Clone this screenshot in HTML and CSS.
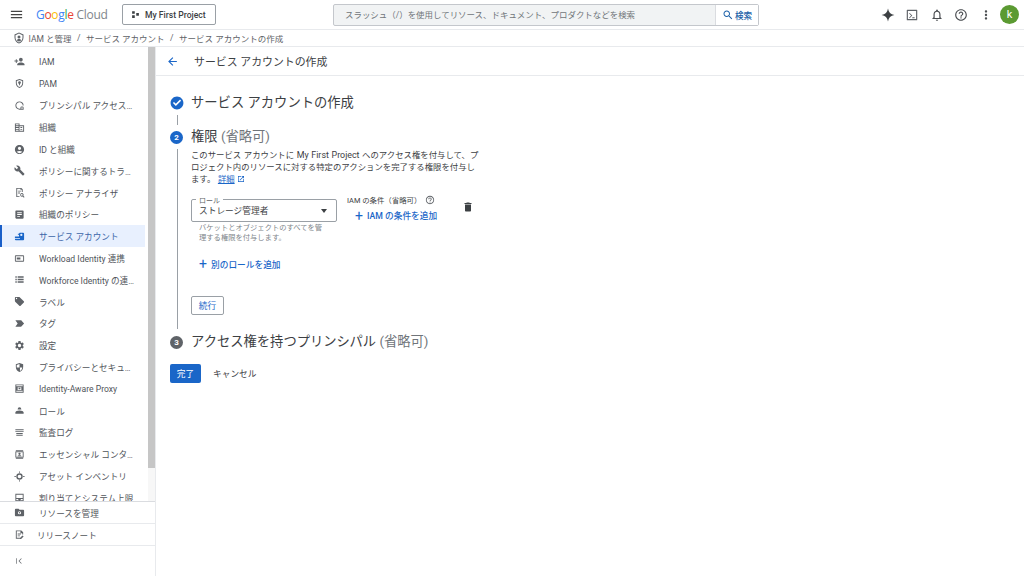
FILE: index.html
```html
<!DOCTYPE html>
<html lang="ja">
<head>
<meta charset="utf-8">
<title>サービス アカウントの作成</title>
<link rel="stylesheet" href="styles.css">
</head>
<body>
<svg class="defs" width="0" height="0" aria-hidden="true">
  <symbol id="menu" viewBox="0 0 24 24"><path d="M3 18h18v-2H3v2zm0-5h18v-2H3v2zm0-7v2h18V6H3z"/></symbol>
  <symbol id="back" viewBox="0 0 24 24"><path d="M20 11H7.83l5.59-5.59L12 4l-8 8 8 8 1.41-1.41L7.83 13H20v-2z"/></symbol>
  <symbol id="search" viewBox="0 0 24 24"><path d="M15.5 14h-.79l-.28-.27C15.41 12.59 16 11.11 16 9.5 16 5.91 13.09 3 9.5 3S3 5.91 3 9.5 5.91 16 9.5 16c1.61 0 3.09-.59 4.23-1.57l.27.28v.79l5 4.99L20.49 19l-4.99-5zm-6 0C7.01 14 5 11.99 5 9.5S7.01 5 9.5 5 14 7.01 14 9.5 11.99 14 9.5 14z"/></symbol>
  <symbol id="help" viewBox="0 0 24 24"><path d="M11 18h2v-2h-2v2zm1-16C6.48 2 2 6.48 2 12s4.48 10 10 10 10-4.48 10-10S17.52 2 12 2zm0 18c-4.41 0-8-3.59-8-8s3.59-8 8-8 8 3.59 8 8-3.59 8-8 8zm0-14c-2.21 0-4 1.79-4 4h2c0-1.1.9-2 2-2s2 .9 2 2c0 2-3 1.75-3 5h2c0-2.25 3-2.5 3-5 0-2.21-1.79-4-4-4z"/></symbol>
  <symbol id="bell" viewBox="0 0 24 24"><path d="M12 22c1.1 0 2-.9 2-2h-4c0 1.1.89 2 2 2zm6-6v-5c0-3.07-1.64-5.64-4.5-6.32V4c0-.83-.67-1.5-1.5-1.5s-1.5.67-1.5 1.5v.68C7.63 5.36 6 7.92 6 11v5l-2 2v1h16v-1l-2-2zm-2 1H8v-6c0-2.48 1.51-4.5 4-4.5s4 2.02 4 4.5v6z"/></symbol>
  <symbol id="dots" viewBox="0 0 24 24"><path d="M12 8c1.1 0 2-.9 2-2s-.9-2-2-2-2 .9-2 2 .9 2 2 2zm0 2c-1.1 0-2 .9-2 2s.9 2 2 2 2-.9 2-2-.9-2-2-2zm0 6c-1.1 0-2 .9-2 2s.9 2 2 2 2-.9 2-2-.9-2-2-2z"/></symbol>
  <symbol id="spark" viewBox="0 0 24 24"><path d="M12 1c1 6.500 4.500 10 11 11-6.500 1-10 4.500-11 11-1-6.500-4.500-10-11-11 6.500-1 10-4.500 11-11z"/></symbol>
  <symbol id="terminal" viewBox="0 0 24 24"><path d="M20 3H4a1 1 0 0 0-1 1v16a1 1 0 0 0 1 1h16a1 1 0 0 0 1-1V4a1 1 0 0 0-1-1zm-1 16H5V5h14v14zM7 9.500l3.500 3.500L7 16.500 8 17.500l4.500-4.500L8 8.500zM12.500 16h4v1.500h-4z"/></symbol>
  <symbol id="shield" viewBox="0 0 24 24"><path d="M12 1 3 5v6c0 5.550 3.840 10.740 9 12 5.160-1.260 9-6.450 9-12V5l-9-4zm0 2.200 7 3.100V11c0 4.520-2.980 8.690-7 9.930C7.980 19.690 5 15.520 5 11V6.300l7-3.100zM12 7a3 3 0 1 0 0 6 3 3 0 0 0 0-6zm0 7c-2 0-4 1-4 2.500V17a6 6 0 0 0 8 0v-.5c0-1.500-2-2.500-4-2.500z"/></symbol>
  <symbol id="personadd" viewBox="0 0 24 24"><path d="M15 12c2.210 0 4-1.790 4-4s-1.790-4-4-4-4 1.790-4 4 1.790 4 4 4zm-9-2V7H4v3H1v2h3v3h2v-3h3v-2H6zm9 4c-2.670 0-8 1.340-8 4v2h16v-2c0-2.660-5.330-4-8-4z"/></symbol>
  <symbol id="pam" viewBox="0 0 24 24"><path d="M12 2 4 5v6c0 5 3.400 9.700 8 11 4.600-1.300 8-6 8-11V5l-8-3zm0 2.100 6 2.300V11c0 4-2.600 7.800-6 8.900C8.600 18.800 6 15 6 11V6.400l6-2.300zM12 7a3 3 0 0 0-1 5.830V16h2v-3.170A3 3 0 0 0 12 7z"/></symbol>
  <symbol id="principal" viewBox="0 0 24 24"><path d="M12 3a9 9 0 1 0 2 17.780v-2.060A7 7 0 1 1 19 12h2a9 9 0 0 0-9-9zm5 11a3 3 0 0 0-3 3v4h7v-4a3 3 0 0 0-3-3h-1zm0 2h1a1 1 0 0 1 1 1v2h-3v-2a1 1 0 0 1 1-1z"/></symbol>
  <symbol id="org" viewBox="0 0 24 24"><path d="M12 7V3H2v18h20V7H12zM10 19H4v-2h6v2zm0-4H4v-2h6v2zm0-4H4V9h6v2zm0-4H4V5h6v2zm10 12h-8V9h8v10zm-2-8h-4v2h4v-2zm0 4h-4v2h4v-2z"/></symbol>
  <symbol id="account" viewBox="0 0 24 24"><path d="M12 2C6.480 2 2 6.480 2 12s4.480 10 10 10 10-4.480 10-10S17.520 2 12 2zm0 4c1.930 0 3.500 1.570 3.500 3.500S13.930 13 12 13s-3.500-1.570-3.500-3.500S10.070 6 12 6zm0 14c-2.030 0-4.430-.82-6.140-2.880C7.550 15.800 9.680 15 12 15s4.450.8 6.140 2.120C16.430 19.180 14.030 20 12 20z"/></symbol>
  <symbol id="wrench" viewBox="0 0 24 24"><path d="M22.700 19l-9.100-9.100c.9-2.300.4-5-1.500-6.900-2-2-5-2.400-7.400-1.300L9 6 6 9 1.600 4.700C.4 7.100.9 10.100 2.900 12.100c1.900 1.900 4.600 2.400 6.900 1.500l9.100 9.100c.4.4 1 .4 1.400 0l2.300-2.300c.5-.4.5-1.100.1-1.400z"/></symbol>
  <symbol id="analyzer" viewBox="0 0 24 24"><path d="M5 2h11l3 3v6h-2V6h-3V4H7v16h5v2H5V2zm4 6h6v2H9V8zm0 4h4v2H9v-2zm8 1a4 4 0 0 1 3.300 6.300L23 22l-1.400 1.400-2.700-2.700A4 4 0 1 1 17 13zm0 2a2 2 0 1 0 0 4 2 2 0 0 0 0-4z"/></symbol>
  <symbol id="policy" viewBox="0 0 24 24"><path d="M19 3H5c-1.100 0-2 .9-2 2v14c0 1.100.9 2 2 2h14c1.100 0 2-.9 2-2V5c0-1.100-.9-2-2-2zm-2 10H7v-2h10v2zm0-4H7V7h10v2zm-4 8H7v-2h6v2z"/></symbol>
  <symbol id="svcacct" viewBox="0 0 24 24"><path d="M2 12h9V8H8.500V6H11a2 2 0 0 1 2-2h7a2 2 0 0 1 2 2v12a2 2 0 0 1-2 2H4a2 2 0 0 1-2-2v-1h11v-2H2v-3zM16 6a2.500 2.500 0 1 0 0 5 2.500 2.500 0 0 0 0-5z"/></symbol>
  <symbol id="workload" viewBox="0 0 24 24"><path d="M20 5H4a2 2 0 0 0-2 2v10a2 2 0 0 0 2 2h16a2 2 0 0 0 2-2V7a2 2 0 0 0-2-2zm0 12H4V7h16v10zM6 10h8v4H6z"/></symbol>
  <symbol id="list" viewBox="0 0 24 24"><path d="M3 5h3v3H3zm0 5.500h3v3H3zM3 16h3v3H3zM8 5h13v3H8zm0 5.500h13v3H8zM8 16h13v3H8z"/></symbol>
  <symbol id="tag" viewBox="0 0 24 24"><path d="M21.410 11.580l-9-9C12.050 2.220 11.550 2 11 2H4c-1.100 0-2 .9-2 2v7c0 .55.22 1.050.59 1.420l9 9c.36.36.86.58 1.410.58.55 0 1.050-.22 1.410-.59l7-7c.37-.36.59-.86.59-1.410 0-.55-.23-1.060-.59-1.420zM5.500 7C4.670 7 4 6.330 4 5.500S4.670 4 5.500 4 7 4.670 7 5.500 6.330 7 5.500 7z"/></symbol>
  <symbol id="label" viewBox="0 0 24 24"><path d="M3 5h12c.67 0 1.270.33 1.630.84L22 12l-5.370 6.160c-.36.51-.96.84-1.630.84H3l5-7-5-7z"/></symbol>
  <symbol id="gear" viewBox="0 0 24 24"><path d="M19.140 12.940c.04-.3.06-.61.06-.94 0-.32-.02-.64-.07-.94l2.030-1.580c.18-.14.23-.41.12-.61l-1.920-3.320c-.12-.22-.37-.29-.59-.22l-2.390.96c-.5-.38-1.030-.7-1.620-.94l-.36-2.540c-.04-.24-.24-.41-.48-.41h-3.840c-.24 0-.43.17-.47.41l-.36 2.540c-.59.24-1.130.57-1.620.94l-2.390-.96c-.22-.08-.47 0-.59.22L2.740 8.870c-.12.21-.08.47.12.61l2.030 1.580c-.05.3-.09.63-.09.94s.02.64.07.94l-2.030 1.580c-.18.14-.23.41-.12.61l1.920 3.320c.12.22.37.29.59.22l2.390-.96c.5.38 1.030.7 1.620.94l.36 2.540c.05.24.24.41.48.41h3.840c.24 0 .44-.17.47-.41l.36-2.540c.59-.24 1.130-.56 1.620-.94l2.390.96c.22.08.47 0 .59-.22l1.920-3.320c.12-.22.07-.47-.12-.61l-2.010-1.580zM12 15.600c-1.980 0-3.600-1.620-3.600-3.600s1.620-3.600 3.600-3.600 3.600 1.620 3.600 3.600-1.620 3.600-3.600 3.600z"/></symbol>
  <symbol id="privacy" viewBox="0 0 24 24"><path d="M12 2 4 5v6c0 5 3.400 9.700 8 11 4.600-1.300 8-6 8-11V5l-8-3zm1 17.700V12h5c-.4 3.500-2.400 6.600-5 7.700zM12 12H6V6.400l6-2.300V12z"/></symbol>
  <symbol id="iap" viewBox="0 0 24 24"><path d="M3 3h18v18H3V3zm2 2v2h14V5H5zm0 12v2h14v-2H5zM8 9v6h8V9H8zm2 1.500h4v3h-4z"/></symbol>
  <symbol id="role" viewBox="0 0 24 24"><path d="M12 5a4 4 0 0 1 4 4v1H8V9a4 4 0 0 1 4-4zM3 16c0-2 4-4 9-4s9 2 9 4v3H3v-3z"/></symbol>
  <symbol id="audit" viewBox="0 0 24 24"><path d="M3 5h18v2H3zm0 4h18v2H3zm2 4h14v2H5zm0 4h14v2H5z"/></symbol>
  <symbol id="contact" viewBox="0 0 24 24"><path d="M4 2h16v2H4zm0 18h16v2H4zM4 5h16a1 1 0 0 1 1 1v12a1 1 0 0 1-1 1H4a1 1 0 0 1-1-1V6a1 1 0 0 1 1-1zm1 2v10h14V7H5zm7 1a2.500 2.500 0 1 1 0 5 2.500 2.500 0 0 1 0-5zm-4.500 8c0-1.500 2-2.500 4.500-2.500s4.500 1 4.500 2.500z"/></symbol>
  <symbol id="asset" viewBox="0 0 24 24"><path d="M12 5a7 7 0 1 0 0 14 7 7 0 0 0 0-14zm0 3a4 4 0 1 1 0 8 4 4 0 0 1 0-8zM11 1h2v3h-2zm0 19h2v3h-2zM1 11h3v2H1zm19 0h3v2h-3z"/></symbol>
  <symbol id="quota" viewBox="0 0 24 24"><path d="M3 4h18v16H3V4zm2 2v7h14V6H5zm0 9v3h14v-3h-4a3 3 0 0 1-6 0H5z"/></symbol>
  <symbol id="folder" viewBox="0 0 24 24"><path d="M20 6h-8l-2-2H4a2 2 0 0 0-2 2v12a2 2 0 0 0 2 2h16a2 2 0 0 0 2-2V8a2 2 0 0 0-2-2zm-8 3a3.500 3.500 0 1 1 0 7 3.500 3.500 0 0 1 0-7zm0 2a1.500 1.500 0 1 0 0 3 1.500 1.500 0 0 0 0-3z"/></symbol>
  <symbol id="notes" viewBox="0 0 24 24"><path d="M4 3h12l4 4v5h-2V9h-4V5H6v14h7v2H4V3zm4 7h7v2H8v-2zm0 4h5v2H8v-2zm10.500 0L21 16.500 15.500 22H13v-2.500l5.500-5.500z"/></symbol>
  <symbol id="collapse" viewBox="0 0 24 24"><path d="M4 4h2v16H4zm16 1.400L18.600 4l-8 8 8 8 1.400-1.400L13.400 12z"/></symbol>
  <symbol id="launch" viewBox="0 0 24 24"><path d="M19 19H5V5h7V3H3v18h18v-9h-2v7zM14 3v2h3.590l-9.830 9.830 1.410 1.410L19 6.410V10h2V3h-7z"/></symbol>
  <symbol id="trash" viewBox="0 0 24 24"><path d="M6 19c0 1.100.9 2 2 2h8c1.100 0 2-.9 2-2V7H6v12zM19 4h-3.500l-1-1h-5l-1 1H5v2h14V4z"/></symbol>
  <symbol id="check" viewBox="0 0 24 24"><path d="M12 1C5.930 1 1 5.930 1 12s4.930 11 11 11 11-4.930 11-11S18.070 1 12 1zm-2 16-5-5 1.800-1.800 3.200 3.200 7.200-7.200L19 8l-9 9z"/></symbol>
  <symbol id="project" viewBox="0 0 24 24"><path d="M3 3h7v7H3zm0 11h7v7H3zm11-6h7v7h-7z"/></symbol>
</svg>

<header class="topbar">
  <svg class="ic ic-menu"><use href="#menu"/></svg>
  <div class="logo"><span class="g-b">G</span><span class="g-r">o</span><span class="g-y">o</span><span class="g-b">g</span><span class="g-g">l</span><span class="g-r">e</span> <span class="logo-cloud">Cloud</span></div>
  <button class="project"><svg class="ic ic-project"><use href="#project"/></svg>My First Project</button>
  <div class="search">
    <div class="search-input">スラッシュ（/）を使用してリソース、ドキュメント、プロダクトなどを検索</div>
    <div class="search-btn"><svg class="ic ic-search"><use href="#search"/></svg>検索</div>
  </div>
  <div class="tools">
    <svg class="ic ic-tool ic-spark"><use href="#spark"/></svg>
    <svg class="ic ic-tool ic-term"><use href="#terminal"/></svg>
    <svg class="ic ic-tool"><use href="#bell"/></svg>
    <svg class="ic ic-tool"><use href="#help"/></svg>
    <svg class="ic ic-tool"><use href="#dots"/></svg>
    <div class="avatar">k</div>
  </div>
</header>

<nav class="crumbs">
  <svg class="ic ic-crumb"><use href="#shield"/></svg>
  <span>IAM と管理</span><span class="sep">/</span><span>サービス アカウント</span><span class="sep">/</span><span>サービス アカウントの作成</span>
</nav>

<div class="body">
  <aside class="sidebar">
    <div class="nav-wrap">
      <ul class="nav">
        <li><svg class="ic"><use href="#personadd"/></svg><span>IAM</span></li>
        <li><svg class="ic"><use href="#pam"/></svg><span>PAM</span></li>
        <li><svg class="ic"><use href="#principal"/></svg><span>プリンシパル アクセス…</span></li>
        <li><svg class="ic"><use href="#org"/></svg><span>組織</span></li>
        <li><svg class="ic"><use href="#account"/></svg><span>ID と組織</span></li>
        <li><svg class="ic"><use href="#wrench"/></svg><span>ポリシーに関するトラ…</span></li>
        <li><svg class="ic"><use href="#analyzer"/></svg><span>ポリシー アナライザ</span></li>
        <li><svg class="ic"><use href="#policy"/></svg><span>組織のポリシー</span></li>
        <li class="active"><svg class="ic"><use href="#svcacct"/></svg><span>サービス アカウント</span></li>
        <li><svg class="ic"><use href="#workload"/></svg><span>Workload Identity 連携</span></li>
        <li><svg class="ic"><use href="#list"/></svg><span>Workforce Identity の連…</span></li>
        <li><svg class="ic"><use href="#tag"/></svg><span>ラベル</span></li>
        <li><svg class="ic"><use href="#label"/></svg><span>タグ</span></li>
        <li><svg class="ic"><use href="#gear"/></svg><span>設定</span></li>
        <li><svg class="ic"><use href="#privacy"/></svg><span>プライバシーとセキュ…</span></li>
        <li><svg class="ic"><use href="#iap"/></svg><span>Identity-Aware Proxy</span></li>
        <li><svg class="ic"><use href="#role"/></svg><span>ロール</span></li>
        <li><svg class="ic"><use href="#audit"/></svg><span>監査ログ</span></li>
        <li><svg class="ic"><use href="#contact"/></svg><span>エッセンシャル コンタ…</span></li>
        <li><svg class="ic"><use href="#asset"/></svg><span>アセット インベントリ</span></li>
        <li><svg class="ic"><use href="#quota"/></svg><span>割り当てとシステム上限</span></li>
      </ul>
      <div class="scroll"><div class="thumb"></div></div>
    </div>
    <div class="side-foot foot-a"><svg class="ic"><use href="#folder"/></svg><span>リソースを管理</span></div>
    <div class="side-foot foot-b"><svg class="ic"><use href="#notes"/></svg><span>リリースノート</span></div>
    <div class="side-collapse"><svg class="ic"><use href="#collapse"/></svg></div>
  </aside>

  <main class="main">
    <div class="titlebar">
      <svg class="ic ic-back"><use href="#back"/></svg>
      <h1>サービス アカウントの作成</h1>
    </div>
    <div class="content">
      <div class="step step-1">
        <svg class="ic ic-check"><use href="#check"/></svg>
        <h2>サービス アカウントの作成</h2>
      </div>
      <div class="link-line"></div>
      <div class="step step-2">
        <span class="num num-on">2</span>
        <h2>権限 <em>(省略可)</em></h2>
      </div>
      <div class="step-body">
        <p class="desc">このサービス アカウントに <span class="latin">My First Project</span> へのアクセス権を付与して、プロジェクト内のリソースに対する特定のアクションを完了する権限を付与します。 <a class="more">詳細</a><svg class="ic ic-launch"><use href="#launch"/></svg></p>
        <div class="binding">
          <div class="role-col">
            <div class="select">
              <span class="select-label">ロール</span>
              <span>ストレージ管理者</span>
              <i class="caret"></i>
            </div>
            <p class="hint">バケットとオブジェクトのすべてを管理する権限を付与します。</p>
          </div>
          <div class="cond-col">
            <div class="cond-label">IAM の条件（省略可）<svg class="ic ic-help"><use href="#help"/></svg></div>
            <div class="add add-cond"><span class="plus">+</span>IAM の条件を追加</div>
          </div>
          <svg class="ic ic-trash"><use href="#trash"/></svg>
        </div>
        <div class="add add-role"><span class="plus">+</span>別のロールを追加</div>
        <button class="continue">続行</button>
      </div>
      <div class="step step-3">
        <span class="num">3</span>
        <h2>アクセス権を持つプリンシパル <em>(省略可)</em></h2>
      </div>
      <div class="actions">
        <button class="done">完了</button>
        <button class="cancel">キャンセル</button>
      </div>
    </div>
  </main>
</div>
</body>
</html>
```
FILE: styles.css
```css
* { box-sizing: border-box; }
html, body { margin: 0; height: 100%; overflow: hidden; }
body {
  width: 1024px; height: 576px; display: flex; flex-direction: column;
  background: #fff; color: #3c4043;
  font-family: Roboto, "Noto Sans CJK JP", sans-serif; font-size: 8.6px;
}
.defs { position: absolute; }
.ic { width: 11px; height: 11px; fill: #5f6368; flex: none; display: block; }
ul, h1, h2, p { margin: 0; padding: 0; font-weight: 400; }
button { font-family: inherit; cursor: pointer; }

.topbar { height: 30px; flex: none; display: flex; align-items: center; border-bottom: 1px solid #e8eaed; }
.ic-menu { width: 15px; height: 15px; margin-left: 9px; fill: #444; }
.logo { margin-left: 12px; width: 73px; font-family: "Open Sans", Roboto, sans-serif; font-size: 12px; letter-spacing: -.3px; white-space: nowrap; color: #80868b; }
.g-b { color: #4285f4; } .g-r { color: #ea4335; } .g-y { color: #fbbc04; } .g-g { color: #34a853; }
.project {
  height: 21px; width: 94px; margin-left: 13px; padding: 0 0 0 8px;
  display: flex; align-items: center; gap: 5px;
  background: #fff; border: 1px solid #9aa0a6; border-radius: 2px; color: #3c4043; font-size: 8.6px; font-weight: 500; white-space: nowrap;
}
.ic-project { width: 9px; height: 9px; fill: #3c4043; }
.search { width: 426px; height: 22px; margin-left: 117px; display: flex; border: 1px solid #c4c7cc; border-radius: 2px; background: #f1f3f4; }
.search-input { flex: 1; padding-left: 11px; line-height: 20px; color: #70757a; font-size: 8.46px; white-space: nowrap; overflow: hidden; }
.search-btn { width: 43px; background: #fff; border-left: 1px solid #dadce0; display: flex; align-items: center; justify-content: center; gap: 1px; color: #1a5fa8; font-size: 8.6px; font-weight: 500; }
.ic-search { width: 12px; height: 12px; fill: #1a5fa8; }
.tools { margin-left: auto; display: flex; align-items: center; gap: 10.5px; padding-right: 5px; }
.ic-tool { width: 14px; height: 14px; fill: #4a4d51; }
.ic-spark { fill: #3c4043; }
.ic-term { fill: #5f6368; }
.avatar { width: 19px; height: 19px; border-radius: 50%; background: #5b9a32; color: #fff; text-align: center; line-height: 19px; font-size: 11px; margin-left: -3px; }

.crumbs { height: 17px; flex: none; display: flex; align-items: center; gap: 4.5px; padding-left: 13px; border-bottom: 1px solid #e8eaed; color: #5f6368; font-size: 8.5px; white-space: nowrap; }
.ic-crumb { width: 12px; height: 12px; margin-right: -1px; }
.sep { padding: 0 1px; }

.body { flex: 1; min-height: 0; display: flex; }
.sidebar { width: 156px; flex: none; display: flex; flex-direction: column; border-right: 1px solid #e8eaed; }
.nav-wrap { height: 455px; flex: none; display: flex; overflow: hidden; border-bottom: 1px solid #dadce0; }
.nav { list-style: none; width: 145px; flex: none; padding-top: 4px; }
.nav li { height: 21.8px; display: flex; align-items: center; gap: 14px; padding-left: 14px; color: #50545a; white-space: nowrap; position: relative; }
.nav li.active { background: #e8f0fe; color: #3c66a8; }
.nav li.active::before { content: ""; position: absolute; left: 0; top: 0; bottom: 0; width: 2px; background: #1a5fc8; }
.nav li.active .ic { fill: #1a66c8; }
.scroll { width: 7px; margin-left: 3px; flex: none; background: #f7f7f7; }
.thumb { height: 421px; background: #c6c6c6; }
.side-foot { height: 22px; flex: none; display: flex; align-items: center; gap: 14px; padding-left: 14px; color: #50545a; border-bottom: 1px solid #e8eaed; white-space: nowrap; }
.foot-a { height: 22px; }
.foot-b { gap: 12px; }
.side-collapse { padding: 11px 0 0 15px; }
.side-collapse .ic { width: 8px; height: 8px; }

.main { flex: 1; min-width: 0; }
.titlebar { height: 29px; display: flex; align-items: center; border-bottom: 1px solid #e8eaed; }
.ic-back { width: 13px; height: 13px; margin-left: 10px; fill: #1a66c8; }
.titlebar h1 { margin-left: 15px; font-size: 10.9px; color: #3c4043; white-space: nowrap; }
.content { padding: 19px 0 0 14px; }
.step { display: flex; align-items: center; gap: 7px; height: 16px; }
.step h2 { font-size: 13.3px; color: #3c4043; white-space: nowrap; line-height: 16px; }
.step h2 em { font-style: normal; color: #70757a; }
.ic-check { width: 14px; height: 14px; fill: #1a66c8; }
.num { width: 13px; height: 13px; margin-right: 1px; border-radius: 50%; background: #5f6368; color: #fff; font-size: 8px; font-weight: 700; text-align: center; line-height: 13px; flex: none; }
.num-on { background: #1a66c8; }
.link-line { width: 1px; height: 10px; margin: 4px 0 4px 7px; background: #9aa0a6; }
.step-body { margin: 4px 0 0 7px; padding: 0 0 16px 13px; border-left: 1px solid #9aa0a6; width: 330px; box-sizing: content-box; height: 164px; }
.desc { width: 290px; line-height: 12px; font-size: 8.4px; word-spacing: .5px; color: #3c4043; }
.latin { font-size: 8.9px; }
.more { color: #1a66c8; text-decoration: underline; }
.ic-launch { display: inline-block; width: 8px; height: 8px; margin-left: 2px; vertical-align: -1px; fill: #1a66c8; }
.binding { display: flex; margin-top: 14px; }
.role-col { width: 146px; flex: none; }
.select { height: 23px; position: relative; border: 1px solid #9aa0a6; border-radius: 2px; padding: 6px 0 0 7px; font-size: 8.7px; line-height: 11px; color: #3c4043; }
.select-label { position: absolute; left: 4px; top: -3px; padding: 0 3px; background: #fff; font-size: 7px; line-height: 8px; color: #5f6368; }
.caret { position: absolute; right: 9px; top: 9px; width: 0; height: 0; border: 3.5px solid transparent; border-top: 4px solid #3c4043; border-bottom: 0; }
.hint { margin: 1px 0 0 8px; width: 128px; font-size: 7.3px; line-height: 10px; color: #80868b; }
.cond-col { margin-left: 10px; width: 108px; flex: none; }
.cond-label { display: flex; align-items: center; font-size: 7.4px; height: 11px; color: #3c4043; white-space: nowrap; margin-top: -5px; margin-bottom: 4px; }
.ic-help { width: 10px; height: 10px; margin-left: 4px; }
.add { color: #1a66c8; font-size: 8.7px; font-weight: 500; white-space: nowrap; display: flex; align-items: center; }
.plus { font-size: 14px; font-weight: 400; line-height: 10px; margin-right: 3px; width: 9px; }
.add-cond { margin-left: 8px; }
.ic-trash { width: 12px; height: 12px; margin: 2px 0 0 7px; fill: #3c4043; }
.add-role { margin: 15px 0 0 8px; height: 12px; }
.continue { display: block; width: 33px; height: 19px; margin-top: 26px; padding: 0; background: #fff; border: 1px solid #9aa0a6; border-radius: 2px; color: #1a66c8; font-size: 8.7px; }
.step-3 { margin-top: 5px; }
.actions { display: flex; align-items: center; margin-top: 14px; }
.done { width: 31px; height: 19px; padding: 0; border: 0; border-radius: 2px; background: #1a66c8; color: #fff; font-size: 8.7px; }
.cancel { margin-left: 12px; padding: 0; border: 0; background: none; color: #3c4043; font-size: 8.7px; }
```
